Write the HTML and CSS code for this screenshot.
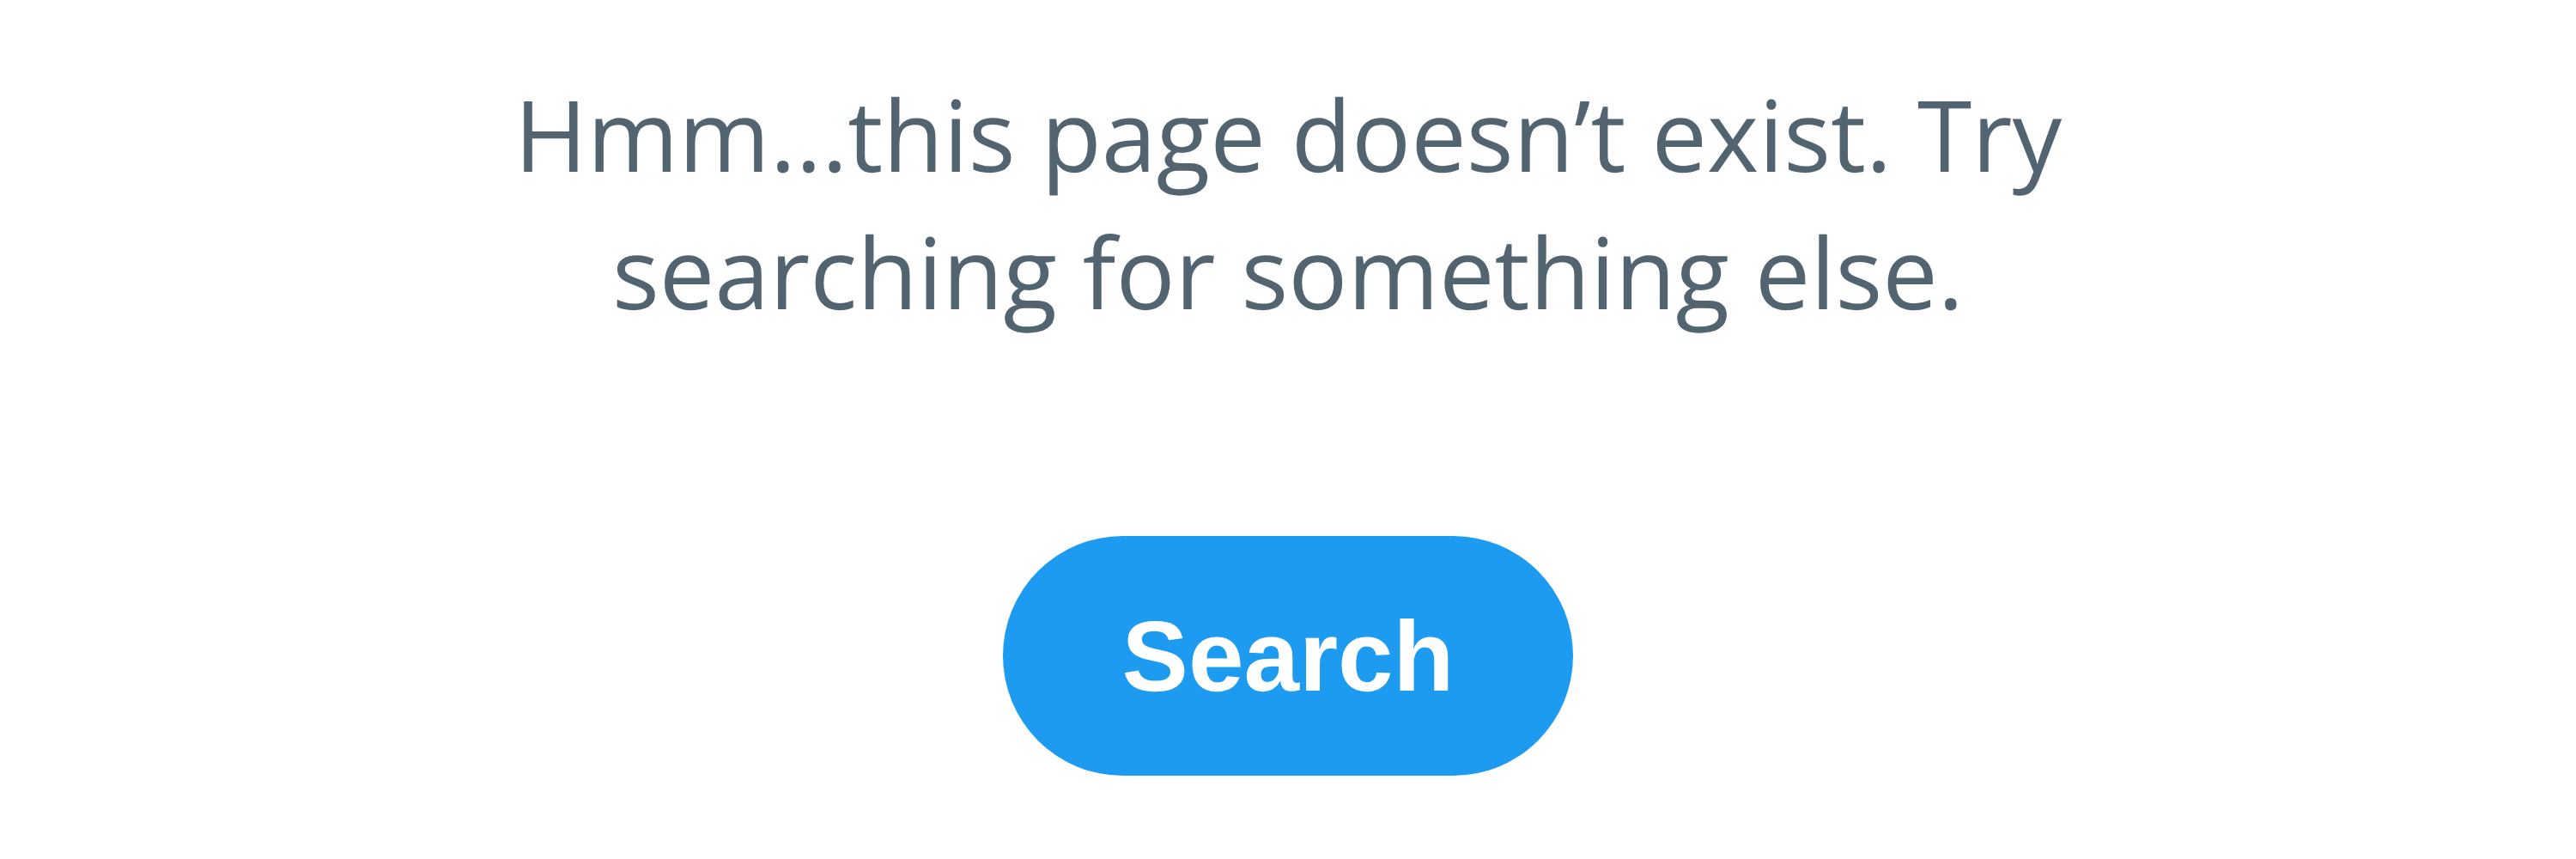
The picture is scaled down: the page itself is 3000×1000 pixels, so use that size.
FILE: index.html
```html
<!doctype html>
<html>
<head>
    <title>Page not found</title>
    <link rel="stylesheet" href="styles.css">
</head>
<body>
<div class="empty">
    <p class="message">Hmm...this page doesn’t exist. Try searching for something else.</p>
    <a class="search-btn" href="#">Search</a>
</div>
</body>
</html>
```

FILE: styles.css
```css
body{
    margin: 0;
    background-color: white;
    font-family: "Open Sans", "Liberation Sans", sans-serif;
    text-rendering: geometricPrecision;
}
.empty{
    display: flex;
    flex-direction: column;
    align-items: center;
    padding-top: 76px;
}
.message{
    margin: 0;
    max-width: 1900px;
    text-align: center;
    font-size: 115px;
    line-height: 160px;
    color: #536471;
}
.search-btn{
    display: flex;
    align-items: center;
    justify-content: center;
    margin-top: 228px;
    height: 279px;
    padding: 0 139px;
    border-radius: 140px;
    background-color: #1d9bf0;
    color: white;
    font-family: "Liberation Sans", Arial, sans-serif;
    font-weight: bold;
    font-size: 116px;
    text-decoration: none;
}
```
